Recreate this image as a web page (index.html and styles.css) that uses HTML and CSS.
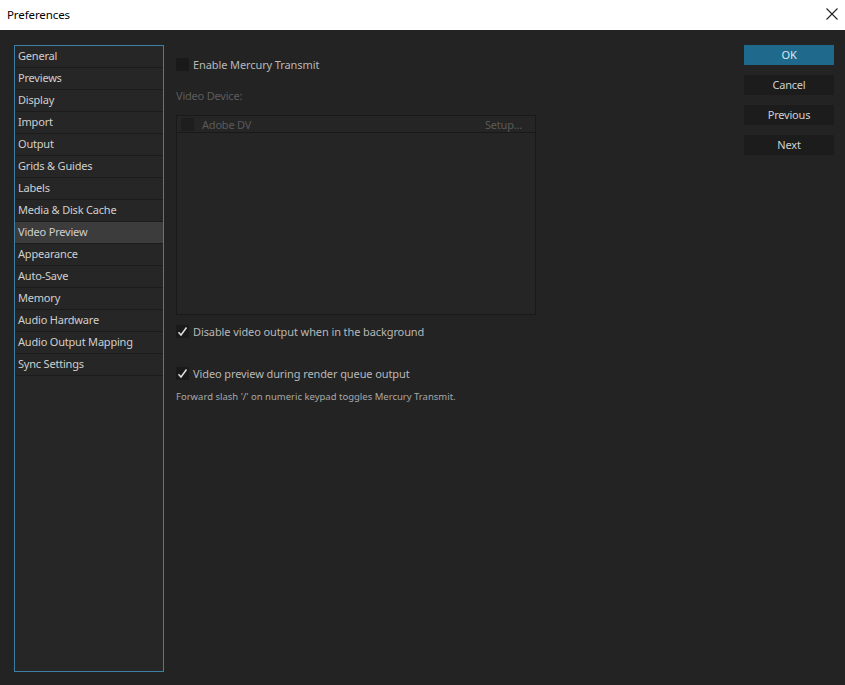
FILE: index.html
```html
<!DOCTYPE html>
<html>
<head>
<meta charset="utf-8">
<link rel="stylesheet" href="styles.css">
</head>
<body>
<div class="window">
  <div class="titlebar">
    <span class="title">Preferences</span>
    <svg class="close" width="12" height="12" viewBox="0 0 12 12"><path d="M0.5 0.5L11.5 11.5M11.5 0.5L0.5 11.5" stroke="#222" stroke-width="1.1" fill="none"/></svg>
  </div>
  <div class="body">
    <div class="sidebar">
      <div class="item">General</div>
      <div class="item">Previews</div>
      <div class="item">Display</div>
      <div class="item">Import</div>
      <div class="item">Output</div>
      <div class="item">Grids &amp; Guides</div>
      <div class="item">Labels</div>
      <div class="item">Media &amp; Disk Cache</div>
      <div class="item selected">Video Preview</div>
      <div class="item">Appearance</div>
      <div class="item">Auto-Save</div>
      <div class="item">Memory</div>
      <div class="item">Audio Hardware</div>
      <div class="item">Audio Output Mapping</div>
      <div class="item">Sync Settings</div>
    </div>
    <div class="content">
      <div class="check-row first">
        <span class="box"></span><span class="label">Enable Mercury Transmit</span>
      </div>
      <div class="section-label">Video Device:</div>
      <div class="device-list">
        <div class="device-row">
          <span class="box dim"></span><span class="device-name">Adobe DV</span><span class="setup">Setup...</span>
        </div>
      </div>
      <div class="check-row second">
        <span class="box checked"><svg width="11" height="11" viewBox="0 0 11 11"><path d="M1.5 6.2L4 9L9.5 1.5" stroke="#e0e0e0" stroke-width="1.5" fill="none"/></svg></span><span class="label">Disable video output when in the background</span>
      </div>
      <div class="check-row third">
        <span class="box checked"><svg width="11" height="11" viewBox="0 0 11 11"><path d="M1.5 6.2L4 9L9.5 1.5" stroke="#e0e0e0" stroke-width="1.5" fill="none"/></svg></span><span class="label">Video preview during render queue output</span>
      </div>
      <div class="note">Forward slash '/' on numeric keypad toggles Mercury Transmit.</div>
    </div>
    <div class="buttons">
      <div class="btn primary">OK</div>
      <div class="btn">Cancel</div>
      <div class="btn">Previous</div>
      <div class="btn">Next</div>
    </div>
  </div>
</div>
</body>
</html>
```
FILE: styles.css
```css
html, body {
  margin: 0;
  padding: 0;
  width: 845px;
  height: 685px;
  overflow: hidden;
  font-family: "Noto Sans", "Open Sans", sans-serif;
}
.window {
  width: 845px;
  height: 685px;
  display: flex;
  flex-direction: column;
  background: #232323;
}
.titlebar {
  height: 30px;
  background: #ffffff;
  display: flex;
  align-items: center;
  justify-content: space-between;
  padding: 0 6px 0 7px;
  box-sizing: border-box;
}
.title {
  font-size: 11.5px;
  letter-spacing: -0.1px;
  color: #000;
  position: relative;
  top: -1px;
}
.close {
  margin-right: 1px;
  position: relative;
  top: -1px;
}
.body {
  flex: 1;
  display: flex;
  padding: 15px 11px 13px 14px;
  box-sizing: border-box;
}
.sidebar {
  width: 150px;
  height: 627px;
  box-sizing: border-box;
  border: 1px solid #3e7fa6;
  background: #262626;
  display: flex;
  flex-direction: column;
}
.item {
  height: 22px;
  box-sizing: border-box;
  border-bottom: 1px solid #1c1c1c;
  padding-left: 3px;
  font-size: 11px;
  letter-spacing: -0.2px;
  line-height: 20px;
  color: #cfcfcf;
}
.item.selected {
  background: #3c3c3c;
}
.content {
  width: 360px;
  margin-left: 12px;
  display: flex;
  flex-direction: column;
}
.check-row {
  display: flex;
  align-items: center;
  height: 14px;
}
.check-row.first { margin-top: 12px; }
.check-row.second { margin-top: 9px; }
.check-row.third { margin-top: 28px; }
.box {
  width: 13px;
  height: 13px;
  background: #1a1a1a;
  margin-right: 4px;
  display: flex;
  align-items: center;
  justify-content: center;
  flex: none;
}
.box.dim { background: #1e1e1e; }
.label {
  font-size: 11px;
  letter-spacing: -0.1px;
  color: #b8b8b8;
}
.section-label {
  margin-top: 17px;
  font-size: 11px;
  letter-spacing: -0.2px;
  line-height: 16px;
  color: #5d5d5d;
  height: 16px;
}
.device-list {
  margin-top: 11px;
  width: 360px;
  height: 200px;
  box-sizing: border-box;
  border: 1px solid #191919;
  background: #252525;
}
.device-row {
  height: 16px;
  border-bottom: 1px solid #191919;
  display: flex;
  align-items: center;
  padding: 0 13px 0 4px;
}
.device-row .box { margin-right: 8px; }
.device-name {
  flex: 1;
  font-size: 11px;
  letter-spacing: -0.2px;
  color: #5a5a5a;
}
.setup {
  font-size: 11px;
  letter-spacing: -0.2px;
  color: #5a5a5a;
}
.note {
  margin-top: 10px;
  font-size: 9.5px;
  line-height: 13px;
  color: #a8a8a8;
}
.buttons {
  margin-left: auto;
  display: flex;
  flex-direction: column;
  gap: 10px;
}
.btn {
  width: 90px;
  height: 20px;
  background: #1c1c1c;
  color: #d0d0d0;
  font-size: 11px;
  letter-spacing: -0.2px;
  line-height: 20px;
  text-align: center;
}
.btn.primary {
  background: #1f6a8c;
  color: #d8e8f0;
}
```
